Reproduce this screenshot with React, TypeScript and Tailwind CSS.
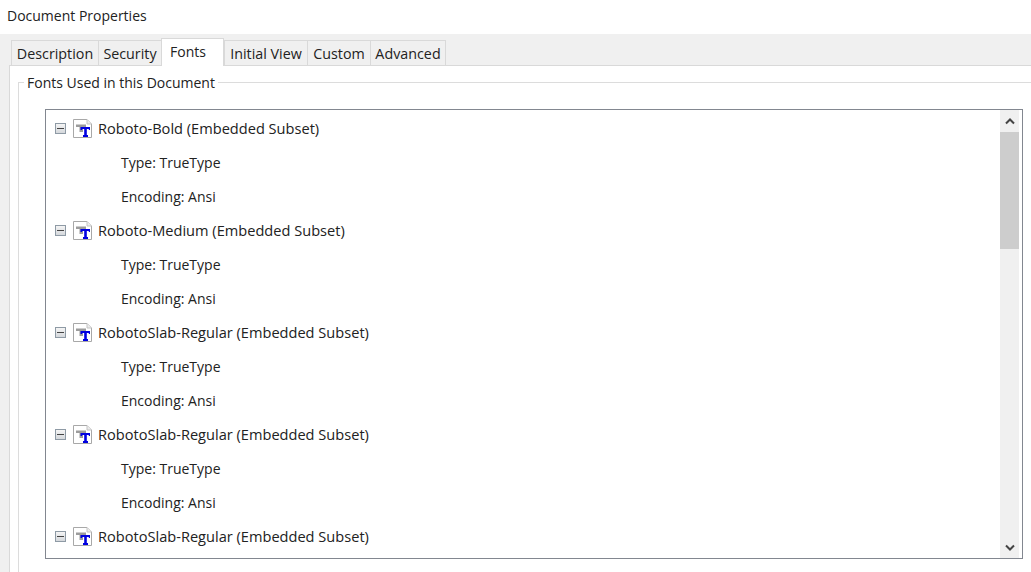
const fonts = ['Roboto-Bold', 'Roboto-Medium', 'RobotoSlab-Regular', 'RobotoSlab-Regular', 'RobotoSlab-Regular'];
const tabs = ['Description', 'Security', 'Fonts', 'Initial View', 'Custom', 'Advanced'];
const tabWidths: Record<string, string> = {
  Description: 'w-[87px]',
  Security: 'w-[63px]',
  Fonts: 'w-[63px]',
  'Initial View': 'w-[83px]',
  Custom: 'w-[63px]',
  Advanced: 'w-[76px]',
};

function FontIcon() {
  return (
    <svg width="21" height="21" viewBox="0 0 21 21" className="flex-none">
      <path d="M1.5 1.5H15L19.5 6V19.5H1.5Z" fill="#fff" stroke="#a8a8a8" />
      <path d="M15 1.5V6H19.5" fill="#ececec" stroke="#c4c4c4" />
      <path d="M4 6.5H14V9H11V14H7.5V9H4Z" fill="#9c9c9c" />
      <path d="M8.5 9H18V12H17L16.6 11H14.8V17H16V19H11V17H12.2V11H10.4L10 12H8.5Z" fill="#0000e0" />
    </svg>
  );
}

function Minus() {
  return (
    <div className="flex h-[11px] w-[11px] flex-none items-center justify-center border border-[#8e9aa5] bg-gradient-to-b from-[#f5f5f5] to-[#d5d8dc]">
      <div className="h-px w-[7px] bg-[#444]" />
    </div>
  );
}

function FontNode({ name, last }: { name: string; last: boolean }) {
  return (
    <div>
      <div className="flex h-[34px] items-center pl-[9px]">
        <Minus />
        <div className="ml-[6px] mr-[5px]">
          <FontIcon />
        </div>
        <span className="pt-[2px] text-[14.6px]">{name} (Embedded Subset)</span>
      </div>
      {!last && <div className="flex h-[34px] items-center pl-[75px]">Type: TrueType</div>}
      {!last && <div className="flex h-[34px] items-center pl-[75px]">Encoding: Ansi</div>}
    </div>
  );
}

function ScrollBar() {
  return (
    <div className="flex w-[19px] flex-none flex-col bg-[#f0f0f0]">
      <div className="flex h-[22px] flex-none items-center justify-center">
        <svg width="10" height="7" viewBox="0 0 10 7">
          <path d="M1 5.5L5 1.5L9 5.5" fill="none" stroke="#444" strokeWidth="2" />
        </svg>
      </div>
      <div className="h-[117px] flex-none bg-[#cdcdcd]" />
      <div className="flex-1" />
      <div className="flex h-[22px] flex-none items-center justify-center">
        <svg width="10" height="7" viewBox="0 0 10 7">
          <path d="M1 1.5L5 5.5L9 1.5" fill="none" stroke="#444" strokeWidth="2" />
        </svg>
      </div>
    </div>
  );
}

export default function App() {
  return (
    <div className="flex h-[572px] w-[1031px] flex-col overflow-hidden bg-white font-['Open_Sans','Noto_Sans',sans-serif] text-[14px] text-[#222]">
      <div className="flex h-[34px] flex-none items-center pb-[3px] pl-[7px]">Document Properties</div>
      <div className="flex flex-1 flex-col bg-[#f0f0f0] pl-[9px]">
        <div className="flex h-[31px] flex-none items-end pl-[2px]">
          {tabs.map((tab) =>
            tab === 'Fonts' ? (
              <div key={tab} className={`relative z-10 -mb-px flex h-[28px] flex-none items-start border border-b-0 border-[#d9d9d9] bg-white pl-[8px] pt-[2px] ${tabWidths[tab]}`}>
                {tab}
              </div>
            ) : (
              <div key={tab} className={`flex h-[25px] flex-none items-center justify-center border border-b-0 border-r-0 border-[#d9d9d9] bg-[#f0f0f0] pt-[2px] text-[14.3px] last:border-r ${tabWidths[tab]}`}>
                {tab}
              </div>
            ),
          )}
        </div>
        <div className="flex-1 border-l border-t border-[#d9d9d9] bg-white pl-[8px] pt-[16px]">
          <div className="relative h-[600px] border-l border-t border-[#dcdcdc] pl-[26px] pt-[26px]">
            <div className="absolute -top-[10px] left-[5px] bg-white px-[3px] leading-[20px]">Fonts Used in this Document</div>
            <div className="flex h-[450px] w-[978px] overflow-hidden border border-[#828790] bg-white">
              <div className="h-full min-w-0 flex-1 overflow-hidden pt-[1px]">
                {fonts.map((name, i) => (
                  <FontNode key={i} name={name} last={i === fonts.length - 1} />
                ))}
              </div>
              <ScrollBar />
              <div className="w-[3px] flex-none" />
            </div>
          </div>
        </div>
      </div>
    </div>
  );
}
